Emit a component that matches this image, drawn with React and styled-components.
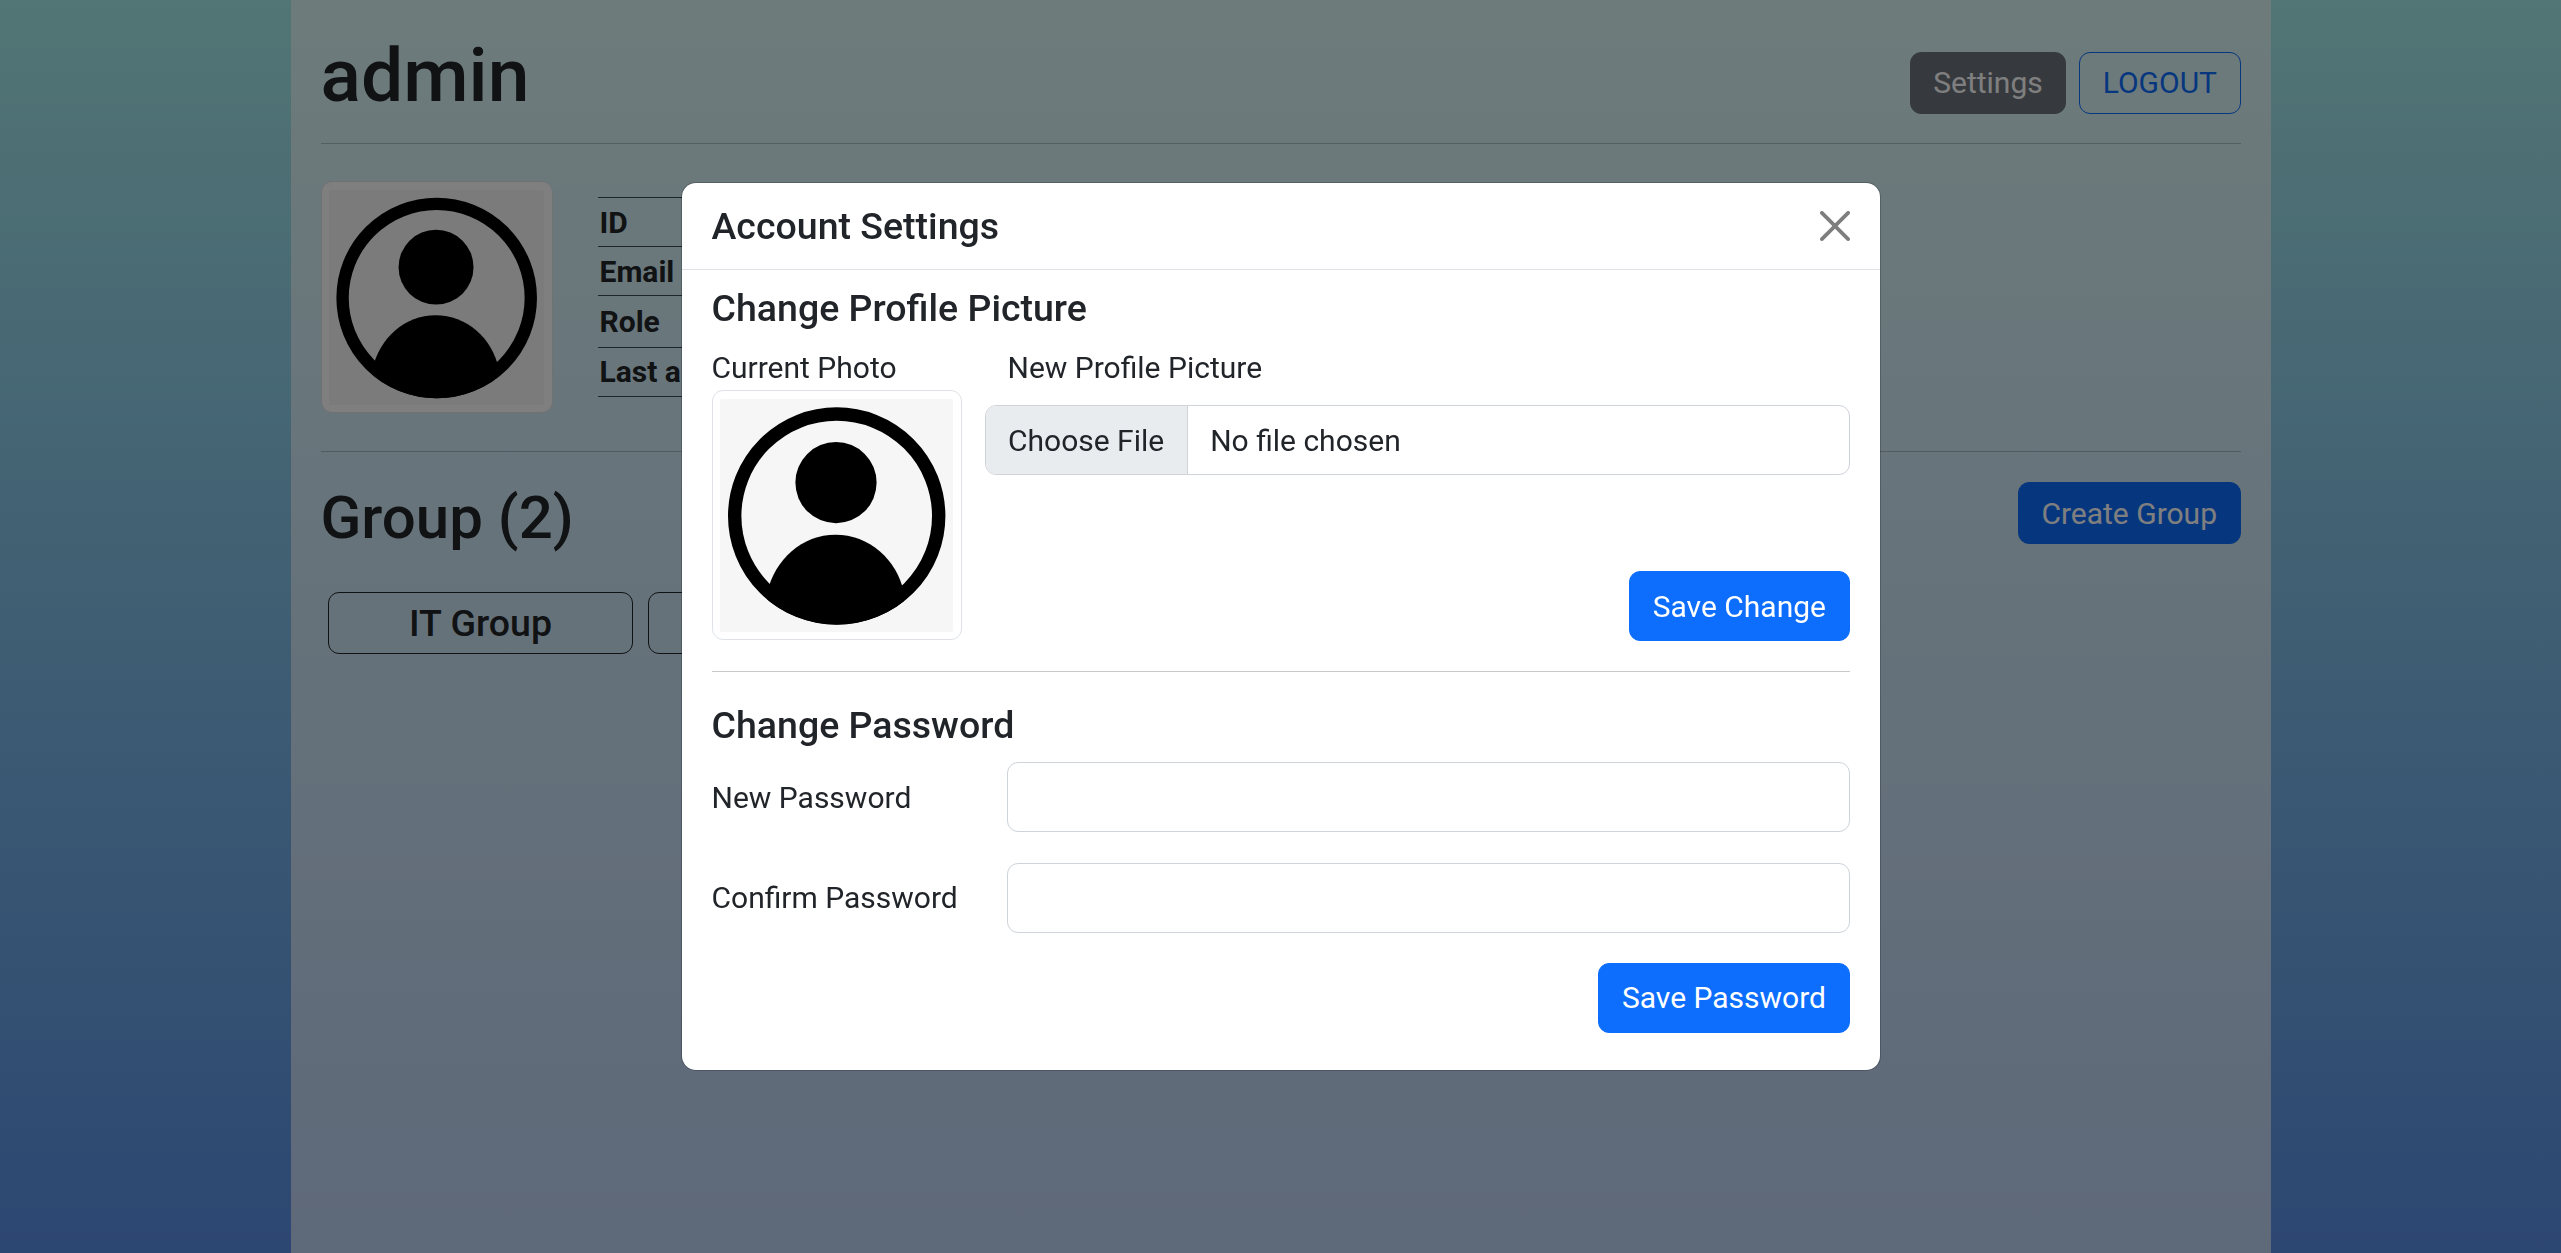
import React from "react";
import styled, { createGlobalStyle } from "styled-components";

const Global = createGlobalStyle`
  *, *::before, *::after { box-sizing: border-box; }
  body {
    margin: 0;
    font-family: Roboto, "Noto Sans", sans-serif;
    font-size: 30px;
    line-height: 1.5;
    color: #212529;
    background: #5a8de8;
    overflow: hidden;
  }
`;

const Page = styled.div`
  height: 1253px;
  display: flex;
  justify-content: center;
  background: linear-gradient(180deg, #a4ebea 0%, #598ee4 100%);
`;

const Container = styled.main`
  width: 1980px;
  padding: 0 30px;
  background: rgba(255, 255, 255, 0.6);
`;

const Header = styled.header`
  display: flex;
  justify-content: space-between;
  align-items: flex-start;
  padding-top: 30px;
  height: 143px;
`;

const Title = styled.h1`
  margin: 0;
  font-size: 75px;
  font-weight: 500;
  line-height: 90px;
`;

const Actions = styled.div`
  display: flex;
  gap: 13px;
  padding-top: 22px;
`;

const variants = {
  primary: "#0d6efd; color: #fff; border-color: #0d6efd",
  dark: "#6c757d; color: #fff; border-color: #6c757d",
  outline: "transparent; color: #0d6efd; border-color: #0d6efd",
};

const Button = styled.button`
  height: ${(p) => (p.$compact ? 62 : 70)}px;
  padding: 0 22.5px ${(p) => (p.$compact ? 1 : 0)}px;
  border: 1px solid;
  border-radius: 11px;
  font: inherit;
  background: ${(p) => variants[p.$variant || "primary"]};
`;

const CreateButton = styled(Button)`
  padding-bottom: 0;
`;

const Rule = styled.hr`
  margin: 0;
  border: 0;
  border-top: 1px solid #212529;
  opacity: 0.25;
`;

const Profile = styled.section`
  display: flex;
  gap: 45px;
  height: 307px;
  padding-top: 37.4px;
`;

const Thumbnail = styled.div`
  flex: none;
  width: ${(p) => p.$size}px;
  height: ${(p) => p.$size}px;
  padding: 7.5px;
  border: 1px solid #dee2e6;
  border-radius: 11px;
  background: #fff;
  svg { display: block; width: 100%; height: 100%; }
`;

const Facts = styled.dl`
  width: 620px;
  height: max-content;
  margin: 15.6px 0 0;
  border-top: 1px solid #3f4d53;
`;

const Fact = styled.dt`
  height: ${(p) => p.$height}px;
  padding: ${(p) => p.$pad}px 2px 0;
  line-height: 45px;
  border-bottom: 1px solid #3f4d53;
  font-weight: 700;
`;

const GroupBar = styled.section`
  display: flex;
  justify-content: space-between;
  align-items: flex-start;
  padding-top: 30px;
`;

const GroupTitle = styled.h2`
  margin: 0;
  font-size: 60px;
  font-weight: 500;
  line-height: 72px;
`;

const Groups = styled.div`
  display: flex;
  gap: 15px;
  padding: 38px 7.5px 0;
`;

const GroupCard = styled.div`
  width: 305px;
  height: 62px;
  border: 1px solid #212529;
  border-radius: 11px;
  text-align: center;
  font-size: 37.5px;
  font-weight: 500;
  line-height: 60px;
`;

const Backdrop = styled.div`
  position: fixed;
  inset: 0;
  display: flex;
  justify-content: center;
  align-items: flex-start;
  padding-top: 182px;
  background: rgba(0, 0, 0, 0.5);
`;

const Dialog = styled.div`
  width: 1200px;
  height: 889px;
  border: 1px solid rgba(0, 0, 0, 0.2);
  border-radius: 15px;
  background: #fff;
  background-clip: padding-box;
`;

const DialogHeader = styled.div`
  display: flex;
  justify-content: space-between;
  align-items: center;
  height: 87px;
  padding: 0 30px;
  border-bottom: 1px solid #dee2e6;
`;

const Heading = styled.h5`
  margin: 0;
  font-size: 37.5px;
  font-weight: 500;
  line-height: 45px;
`;

const Close = styled.button`
  display: flex;
  padding: 0;
  border: 0;
  background: none;
  opacity: 0.5;
`;

const DialogBody = styled.div`
  padding: 15.6px 30px 0;
`;

const PictureRow = styled.div`
  display: flex;
  gap: 23px;
  height: 296px;
  margin-top: 14.8px;
`;

const PhotoColumn = styled.div`
  width: 250px;
`;

const Label = styled.label`
  display: block;
  line-height: 45px;
  padding-left: ${(p) => (p.$inset ? 23 : 0)}px;
  width: ${(p) => (p.$width ? p.$width + "px" : "auto")};
`;

const UploadColumn = styled.div`
  flex: 1;
  display: flex;
  flex-direction: column;
`;

const FilePicker = styled.div`
  display: flex;
  height: 70px;
  margin-top: 15px;
  border: 1px solid #ced4da;
  border-radius: 11px;
  overflow: hidden;
  line-height: 69px;
`;

const FileButton = styled.span`
  padding: 0 22.5px;
  border-right: 1px solid #ced4da;
  background: #e9ecef;
`;

const FileName = styled.span`
  padding-left: 22.5px;
`;

const End = styled.div`
  display: flex;
  justify-content: flex-end;
  margin-top: auto;
`;

const Divider = styled(Rule)`
  margin: 29.6px 0 30.6px;
`;

const Field = styled.div`
  display: flex;
  align-items: center;
  height: 70px;
  margin: ${(p) => p.$top}px 0 ${(p) => p.$bottom}px;
`;

const Input = styled.input`
  flex: 1;
  height: 70px;
  border: 1px solid #ced4da;
  border-radius: 11px;
  background: #fff;
  font: inherit;
`;

function Avatar() {
  return (
    <svg viewBox="0 0 233 233">
      <rect width="233" height="233" rx="2" fill="#f6f6f6" />
      <clipPath id="ring"><circle cx="116.7" cy="117" r="108.6" /></clipPath>
      <circle cx="116.7" cy="117" r="102" fill="none" stroke="#000" strokeWidth="13.4" />
      <circle cx="116" cy="83.6" r="40.6" />
      <path clipPath="url(#ring)" d="M47 194C55 160 82 135.700 115.500 135.700S177 160 184 194V233H47Z" />
    </svg>
  );
}

export default function App() {
  return (
    <>
      <Global />
      <Page>
        <Container>
          <Header>
            <Title>admin</Title>
            <Actions>
              <Button $compact $variant="dark">Settings</Button>
              <Button $compact $variant="outline">LOGOUT</Button>
            </Actions>
          </Header>
          <Rule />
          <Profile>
            <Thumbnail $size={232}><Avatar /></Thumbnail>
            <Facts>
              <Fact $height={49} $pad={2}>ID</Fact>
              <Fact $height={49} $pad={2}>Email</Fact>
              <Fact $height={52} $pad={3}>Role</Fact>
              <Fact $height={49} $pad={1}>Last a</Fact>
            </Facts>
          </Profile>
          <Rule />
          <GroupBar>
            <GroupTitle>Group (2)</GroupTitle>
            <CreateButton $compact>Create Group</CreateButton>
          </GroupBar>
          <Groups>
            <GroupCard>IT Group</GroupCard>
            <GroupCard />
          </Groups>
        </Container>
      </Page>
      <Backdrop>
        <Dialog>
          <DialogHeader>
            <Heading>Account Settings</Heading>
            <Close aria-label="Close">
              <svg width="30" height="30" viewBox="0 0 16 16">
                <path d="M.293.293a1 1 0 0 1 1.414 0L8 6.586 14.293.293a1 1 0 1 1 1.414 1.414L9.414 8l6.293 6.293a1 1 0 0 1-1.414 1.414L8 9.414l-6.293 6.293a1 1 0 0 1-1.414-1.414L6.586 8 .293 1.707a1 1 0 0 1 0-1.414z" />
              </svg>
            </Close>
          </DialogHeader>
          <DialogBody>
            <Heading>Change Profile Picture</Heading>
            <PictureRow>
              <PhotoColumn>
                <Label>Current Photo</Label>
                <Thumbnail $size={250}><Avatar /></Thumbnail>
              </PhotoColumn>
              <UploadColumn>
                <Label $inset>New Profile Picture</Label>
                <FilePicker>
                  <FileButton>Choose File</FileButton>
                  <FileName>No file chosen</FileName>
                </FilePicker>
                <End><Button>Save Change</Button></End>
              </UploadColumn>
            </PictureRow>
            <Divider />
            <Heading>Change Password</Heading>
            <Field $top={14.8} $bottom={30.6}>
              <Label $width={295}>New Password</Label>
              <Input type="password" />
            </Field>
            <Field $top={0} $bottom={30}>
              <Label $width={295}>Confirm Password</Label>
              <Input type="password" />
            </Field>
            <End><Button>Save Password</Button></End>
          </DialogBody>
        </Dialog>
      </Backdrop>
    </>
  );
}
